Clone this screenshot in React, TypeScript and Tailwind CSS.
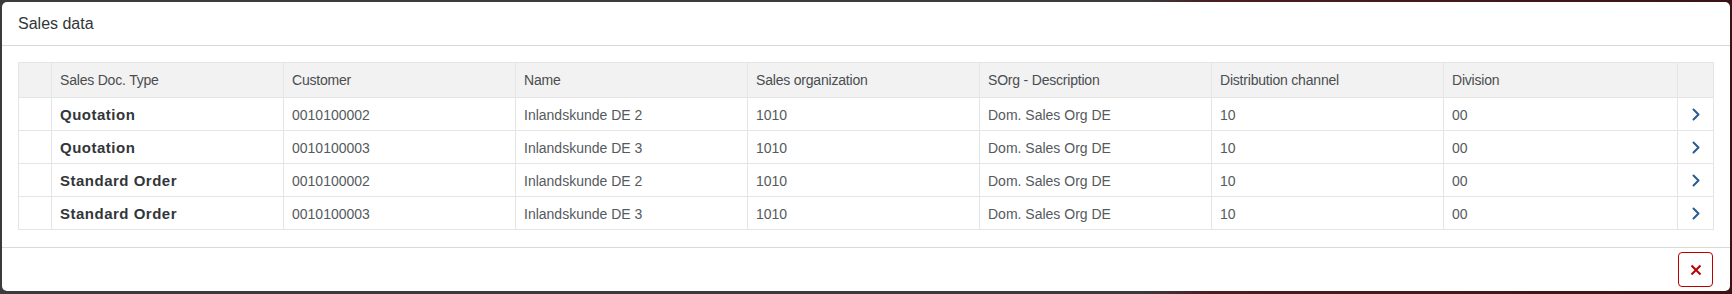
import React from "react";

const rows = [
  ["Quotation", "0010100002", "Inlandskunde DE 2"],
  ["Quotation", "0010100003", "Inlandskunde DE 3"],
  ["Standard Order", "0010100002", "Inlandskunde DE 2"],
  ["Standard Order", "0010100003", "Inlandskunde DE 3"],
];

const headers = [
  "Sales Doc. Type",
  "Customer",
  "Name",
  "Sales organization",
  "SOrg - Description",
  "Distribution channel",
  "Division",
];

function Chevron() {
  return (
    <svg width="10" height="13" viewBox="0 0 10 13" fill="none">
      <path d="M2.5 1.5 L7.5 6.5 L2.5 11.5" stroke="#2b5c8e" strokeWidth="2" strokeLinecap="round" strokeLinejoin="round" />
    </svg>
  );
}

export default function App() {
  return (
    <div
      className="w-[1732px] h-[294px] p-[2px] bg-[linear-gradient(90deg,#3b3b3b_0%,#3b3b3b_66%,#4a1d1f_70%,#3a1414_100%)]"
      style={{ fontFamily: '"Liberation Sans", Arial, sans-serif' }}
    >
      <div className="flex h-[289px] w-[1728px] flex-col rounded-[5px] bg-white">
        <div className="flex h-[44px] shrink-0 items-center border-b border-[#d9d9d9] pl-[16px] pt-[1px] text-[16px] text-[#32363a]">
          Sales data
        </div>
        <div className="px-[16px] pb-[17px] pt-[16px]">
          <table className="w-[1695px] table-fixed border-collapse text-[14px]">
            <colgroup>
              <col className="w-[33px]" />
              <col className="w-[232px]" />
              <col className="w-[232px]" />
              <col className="w-[232px]" />
              <col className="w-[232px]" />
              <col className="w-[232px]" />
              <col className="w-[232px]" />
              <col className="w-[234px]" />
              <col className="w-[36px]" />
            </colgroup>
            <thead>
              <tr className="h-[35px] bg-[#f2f2f2]">
                <th className="border border-[#e5e5e5]"></th>
                {headers.map((h) => (
                  <th key={h} className="border border-[#e5e5e5] px-[8px] pt-[1px] text-left font-normal tracking-[-0.2px] text-[#4a4d50]">
                    {h}
                  </th>
                ))}
                <th className="border border-[#e5e5e5]"></th>
              </tr>
            </thead>
            <tbody>
              {rows.map((r, i) => (
                <tr key={i} className="h-[33px]">
                  <td className="border border-[#e5e5e5]"></td>
                  <td className="border border-[#e5e5e5] px-[8px] pt-[2px] text-[15px] font-bold tracking-[0.5px] text-[#32363a]">{r[0]}</td>
                  <td className="border border-[#e5e5e5] px-[8px] pt-[2px] text-[#555a5e]">{r[1]}</td>
                  <td className="border border-[#e5e5e5] px-[8px] pt-[2px] text-[#555a5e]">{r[2]}</td>
                  <td className="border border-[#e5e5e5] px-[8px] pt-[2px] text-[#555a5e]">1010</td>
                  <td className="border border-[#e5e5e5] px-[8px] pt-[2px] text-[#555a5e]">Dom. Sales Org DE</td>
                  <td className="border border-[#e5e5e5] px-[8px] pt-[2px] text-[#555a5e]">10</td>
                  <td className="border border-[#e5e5e5] px-[8px] pt-[2px] text-[#555a5e]">00</td>
                  <td className="border border-[#e5e5e5]">
                    <div className="flex items-center justify-center">
                      <Chevron />
                    </div>
                  </td>
                </tr>
              ))}
            </tbody>
          </table>
        </div>
        <div className="flex flex-1 items-center justify-end border-t border-[#d9d9d9] pr-[17px]">
          <button className="flex h-[35px] w-[35px] items-center justify-center rounded-[4px] border border-[#bb0000] bg-white">
            <svg width="12" height="12" viewBox="0 0 12 12" fill="none">
              <path d="M1.5 1.5 L10.5 10.5 M10.5 1.5 L1.5 10.5" stroke="#bb0000" strokeWidth="2" />
            </svg>
          </button>
        </div>
      </div>
    </div>
  );
}
